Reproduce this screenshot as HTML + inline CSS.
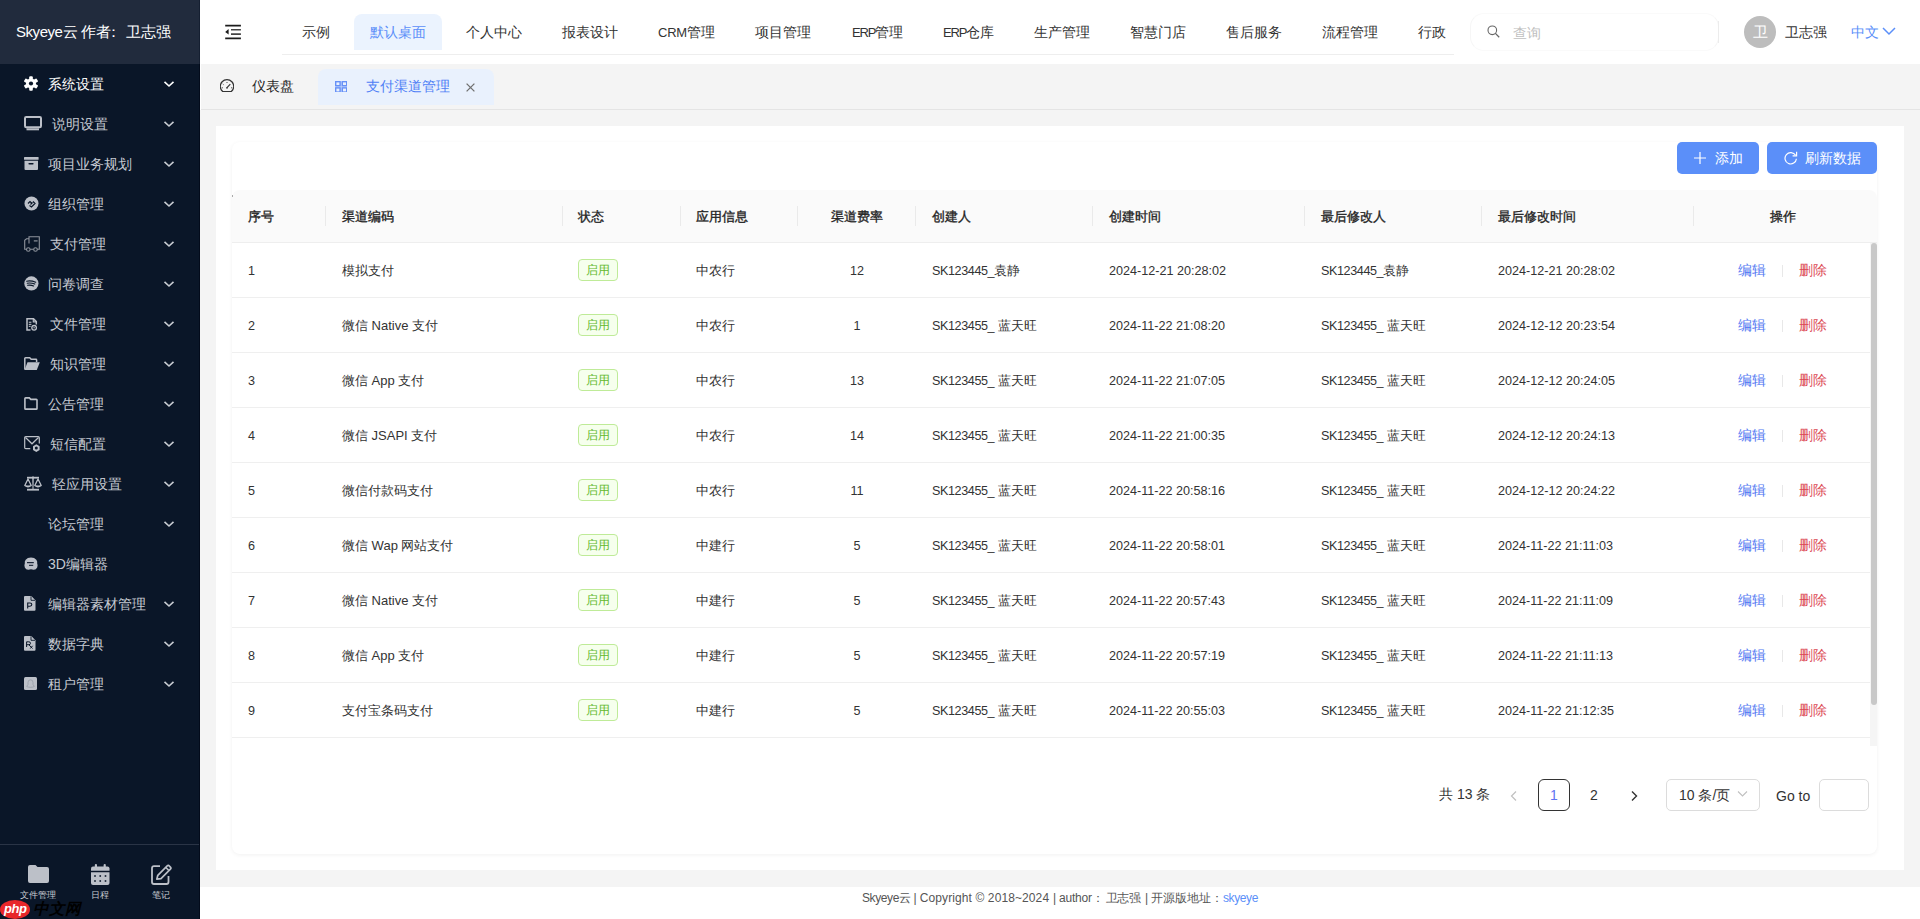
<!DOCTYPE html><html><head><meta charset="utf-8"><style>
*{margin:0;padding:0;box-sizing:border-box;}
html,body{width:1920px;height:919px;overflow:hidden;background:#fff;font-family:"Liberation Sans",sans-serif;color:#333;}
.ab{position:absolute;white-space:nowrap;}
#side{position:absolute;left:0;top:0;width:200px;height:919px;background:#0a1628;}
#logo{position:absolute;left:0;top:0;width:200px;height:64px;background:#212b3d;}
.mt{position:absolute;font-size:14px;line-height:16px;color:#c6cad2;white-space:nowrap;}
.ch{position:absolute;left:163px;width:12px;height:8px;}
#hdr{position:absolute;left:200px;top:0;width:1720px;height:64px;background:#fff;}
.nv{position:absolute;top:24px;font-size:14px;line-height:16px;color:#333;white-space:nowrap;}
#tabs{position:absolute;left:201px;top:64px;width:1719px;height:46px;background:#f4f4f4;border-bottom:1px solid #e4e4e4;}
#main{position:absolute;left:200px;top:110px;width:1720px;height:777px;background:#f4f4f4;}
#card{position:absolute;left:216px;top:126px;width:1688px;height:744px;background:#fff;}
#panel{position:absolute;left:232px;top:142px;width:1645px;height:712px;background:#fff;border-radius:8px;box-shadow:0 1px 4px rgba(0,0,0,0.06);}
#foot{position:absolute;left:200px;top:887px;width:1720px;height:32px;background:#fff;}
.th{position:absolute;top:209px;font-size:13px;line-height:16px;font-weight:normal;-webkit-text-stroke:0.35px #262626;color:#222;white-space:nowrap;}
.sep{position:absolute;top:206px;width:1px;height:20px;background:#eaeaea;}
.td{position:absolute;font-size:13px;line-height:16px;color:#333;white-space:nowrap;}
.num{font-size:12.6px;}
.tag{position:absolute;left:578px;width:40px;height:22px;border:1px solid #bfeb98;background:#f6ffed;border-radius:4px;color:#62b92c;font-size:12px;line-height:20px;text-align:center;}
.rl{position:absolute;left:232px;width:1638px;height:1px;background:#efefef;}
.ed{position:absolute;left:1738px;font-size:14px;line-height:16px;color:#5479f2;}
.dl{position:absolute;left:1799px;font-size:14px;line-height:16px;color:#dc4a55;}
.dv{position:absolute;left:1782px;width:1px;height:12px;background:#e8e8e8;}
</style></head><body>
<div id="side"><div id="logo"></div>
<div class="ab" style="left:16px;top:22px;font-size:15px;line-height:20px;color:#fff;"><span style="letter-spacing:-0.45px">Skyeye</span>云</div>
<div class="ab" style="left:81px;top:22px;font-size:15px;line-height:20px;color:#fff;">作者</div>
<div class="ab" style="left:106px;top:22px;font-size:15px;line-height:20px;color:#fff;">：</div>
<div class="ab" style="left:125.5px;top:22px;font-size:15px;line-height:20px;color:#fff;">卫志强</div>
<div class="mt" style="left:48px;top:76px;color:#ffffff">系统设置</div>
<svg class="ch" style="top:79.5px" viewBox="0 0 12 8"><path d="M1.5 1.8 L6 6 L10.5 1.8" fill="none" stroke="#ffffff" stroke-width="1.6"/></svg>
<div class="mt" style="left:52px;top:116px;color:#c6cad2">说明设置</div>
<svg class="ch" style="top:119.5px" viewBox="0 0 12 8"><path d="M1.5 1.8 L6 6 L10.5 1.8" fill="none" stroke="#c8ccd2" stroke-width="1.6"/></svg>
<div class="mt" style="left:48px;top:156px;color:#c6cad2">项目业务规划</div>
<svg class="ch" style="top:159.5px" viewBox="0 0 12 8"><path d="M1.5 1.8 L6 6 L10.5 1.8" fill="none" stroke="#c8ccd2" stroke-width="1.6"/></svg>
<div class="mt" style="left:48px;top:196px;color:#c6cad2">组织管理</div>
<svg class="ch" style="top:199.5px" viewBox="0 0 12 8"><path d="M1.5 1.8 L6 6 L10.5 1.8" fill="none" stroke="#c8ccd2" stroke-width="1.6"/></svg>
<div class="mt" style="left:50px;top:236px;color:#c6cad2">支付管理</div>
<svg class="ch" style="top:239.5px" viewBox="0 0 12 8"><path d="M1.5 1.8 L6 6 L10.5 1.8" fill="none" stroke="#c8ccd2" stroke-width="1.6"/></svg>
<div class="mt" style="left:48px;top:276px;color:#c6cad2">问卷调查</div>
<svg class="ch" style="top:279.5px" viewBox="0 0 12 8"><path d="M1.5 1.8 L6 6 L10.5 1.8" fill="none" stroke="#c8ccd2" stroke-width="1.6"/></svg>
<div class="mt" style="left:50px;top:316px;color:#c6cad2">文件管理</div>
<svg class="ch" style="top:319.5px" viewBox="0 0 12 8"><path d="M1.5 1.8 L6 6 L10.5 1.8" fill="none" stroke="#c8ccd2" stroke-width="1.6"/></svg>
<div class="mt" style="left:50px;top:356px;color:#c6cad2">知识管理</div>
<svg class="ch" style="top:359.5px" viewBox="0 0 12 8"><path d="M1.5 1.8 L6 6 L10.5 1.8" fill="none" stroke="#c8ccd2" stroke-width="1.6"/></svg>
<div class="mt" style="left:48px;top:396px;color:#c6cad2">公告管理</div>
<svg class="ch" style="top:399.5px" viewBox="0 0 12 8"><path d="M1.5 1.8 L6 6 L10.5 1.8" fill="none" stroke="#c8ccd2" stroke-width="1.6"/></svg>
<div class="mt" style="left:50px;top:436px;color:#c6cad2">短信配置</div>
<svg class="ch" style="top:439.5px" viewBox="0 0 12 8"><path d="M1.5 1.8 L6 6 L10.5 1.8" fill="none" stroke="#c8ccd2" stroke-width="1.6"/></svg>
<div class="mt" style="left:52px;top:476px;color:#c6cad2">轻应用设置</div>
<svg class="ch" style="top:479.5px" viewBox="0 0 12 8"><path d="M1.5 1.8 L6 6 L10.5 1.8" fill="none" stroke="#c8ccd2" stroke-width="1.6"/></svg>
<div class="mt" style="left:48px;top:516px;color:#c6cad2">论坛管理</div>
<svg class="ch" style="top:519.5px" viewBox="0 0 12 8"><path d="M1.5 1.8 L6 6 L10.5 1.8" fill="none" stroke="#c8ccd2" stroke-width="1.6"/></svg>
<div class="mt" style="left:48px;top:556px;color:#c6cad2">3D编辑器</div>
<div class="mt" style="left:48px;top:596px;color:#c6cad2">编辑器素材管理</div>
<svg class="ch" style="top:599.5px" viewBox="0 0 12 8"><path d="M1.5 1.8 L6 6 L10.5 1.8" fill="none" stroke="#c8ccd2" stroke-width="1.6"/></svg>
<div class="mt" style="left:48px;top:636px;color:#c6cad2">数据字典</div>
<svg class="ch" style="top:639.5px" viewBox="0 0 12 8"><path d="M1.5 1.8 L6 6 L10.5 1.8" fill="none" stroke="#c8ccd2" stroke-width="1.6"/></svg>
<div class="mt" style="left:48px;top:676px;color:#c6cad2">租户管理</div>
<svg class="ch" style="top:679.5px" viewBox="0 0 12 8"><path d="M1.5 1.8 L6 6 L10.5 1.8" fill="none" stroke="#c8ccd2" stroke-width="1.6"/></svg>
<svg class="ab" style="left:24px;top:76px;" width="14" height="15" viewBox="0 0 14 15"><rect x="5.2" y="0.2" width="3.6" height="3.6" rx="1" fill="#fff" transform="rotate(0 7 7.5)"/><rect x="5.2" y="0.2" width="3.6" height="3.6" rx="1" fill="#fff" transform="rotate(60 7 7.5)"/><rect x="5.2" y="0.2" width="3.6" height="3.6" rx="1" fill="#fff" transform="rotate(120 7 7.5)"/><rect x="5.2" y="0.2" width="3.6" height="3.6" rx="1" fill="#fff" transform="rotate(180 7 7.5)"/><rect x="5.2" y="0.2" width="3.6" height="3.6" rx="1" fill="#fff" transform="rotate(240 7 7.5)"/><rect x="5.2" y="0.2" width="3.6" height="3.6" rx="1" fill="#fff" transform="rotate(300 7 7.5)"/><circle cx="7" cy="7.5" r="5" fill="#fff"/><circle cx="7" cy="7.5" r="2.1" fill="#0a1628"/></svg>
<svg class="ab" style="left:24px;top:116px;" width="18" height="15" viewBox="0 0 18 15"><rect x="1" y="1" width="16" height="10.2" rx="1.2" fill="none" stroke="#bcc0c8" stroke-width="2"/><rect x="2.5" y="12.3" width="12.5" height="2" fill="#bcc0c8"/></svg>
<svg class="ab" style="left:24px;top:157px;" width="15" height="13" viewBox="0 0 15 13"><rect x="0" y="0" width="14.6" height="2.8" rx="0.6" fill="#bcc0c8"/><path d="M0.5 3.8 H14 V12 Q14 13 13 13 H1.5 Q0.5 13 0.5 12 Z" fill="#bcc0c8"/><rect x="4.4" y="6" width="5.2" height="1.4" rx="0.7" fill="#0a1628"/></svg>
<svg class="ab" style="left:23.5px;top:196.2px;" width="15" height="15" viewBox="0 0 15 15"><circle cx="7.5" cy="7.5" r="7" fill="#bcc0c8"/><path d="M4 7.5 L6 5.5 L7.5 7 M5.5 9.5 L7.5 11 L11 7.5 L9 5.5 M6.5 8.5 L8.5 6.5" fill="none" stroke="#0a1628" stroke-width="1.2"/></svg>
<svg class="ab" style="left:24px;top:236px;" width="16" height="16" viewBox="0 0 16 16"><path d="M5 7.5 V0.7 H15.3 V13.3 H13.3 M9.5 13.3 H6.2 M2.3 13.3 H0.7 V4.3 L2.5 2.8 H4.8" fill="none" stroke="#8e939c" stroke-width="1.1"/><circle cx="4.3" cy="13.5" r="1.8" fill="none" stroke="#8e939c" stroke-width="1.1"/><circle cx="11.5" cy="13.5" r="1.8" fill="none" stroke="#8e939c" stroke-width="1.1"/><rect x="9.8" y="4.3" width="3.8" height="1.2" fill="#8e939c"/></svg>
<svg class="ab" style="left:23.5px;top:276.3px;" width="15" height="15" viewBox="0 0 15 15"><circle cx="7.4" cy="7.4" r="7.1" fill="#bcc0c8"/><path d="M2.6 5.2 Q7 4.3 11.7 6.2 M3.2 7.2 Q7 6.5 10.8 8.1 M3.6 9.3 Q6.8 8.7 9.6 10" fill="none" stroke="#0a1628" stroke-width="1.1" stroke-linecap="round"/></svg>
<svg class="ab" style="left:26px;top:317.5px;" width="12" height="13" viewBox="0 0 12 13"><path d="M4.5 12 H1 V0.8 H7.5 L10.3 3.6 V6.5" fill="none" stroke="#bcc0c8" stroke-width="1.5"/><path d="M7.3 0.8 V3.8 H10.3" fill="none" stroke="#bcc0c8" stroke-width="1.2"/><rect x="2.8" y="3.7" width="2.6" height="1.1" fill="#bcc0c8"/><rect x="2.8" y="5.8" width="2.6" height="1.1" fill="#bcc0c8"/><rect x="2.8" y="7.8" width="1.8" height="1.1" fill="#bcc0c8"/><circle cx="8.1" cy="9.8" r="2.3" fill="none" stroke="#bcc0c8" stroke-width="1.3"/><circle cx="8.1" cy="9.8" r="0.7" fill="#bcc0c8"/></svg>
<svg class="ab" style="left:24px;top:357px;" width="16" height="13" viewBox="0 0 16 13"><path d="M0.8 12.5 V1.5 Q0.8 0.8 1.5 0.8 H5.7 L7.2 2.3 H12 Q12.6 2.3 12.6 3 V5" fill="none" stroke="#bcc0c8" stroke-width="1.5"/><path d="M0.5 13 L3.5 5.3 H15.8 L12.8 13 Z" fill="#bcc0c8"/></svg>
<svg class="ab" style="left:24px;top:397px;" width="14" height="13" viewBox="0 0 14 13"><path d="M0.9 1.6 Q0.9 0.9 1.6 0.9 H5.3 L6.8 2.4 H12.3 Q13 2.4 13 3.1 V11.4 Q13 12.1 12.3 12.1 H1.6 Q0.9 12.1 0.9 11.4 Z" fill="none" stroke="#bcc0c8" stroke-width="1.6"/></svg>
<svg class="ab" style="left:24px;top:435.5px;" width="17" height="17" viewBox="0 0 17 17"><path d="M6.3 12.7 H1.8 Q0.7 12.7 0.7 11.6 V1.8 Q0.7 0.7 1.8 0.7 H14.2 Q15.3 0.7 15.3 1.8 V7.5" fill="none" stroke="#bcc0c8" stroke-width="1.2"/><path d="M1.5 1.5 L8 7.8 L14.5 1.5" fill="none" stroke="#bcc0c8" stroke-width="1.2"/><path d="M12.3 8.3 L15.6 10.2 V14 L12.3 15.9 L9 14 V10.2 Z" fill="#bcc0c8"/><circle cx="12.3" cy="12.1" r="1.5" fill="#0a1628"/></svg>
<svg class="ab" style="left:24px;top:476px;" width="18" height="15" viewBox="0 0 18 15"><rect x="3" y="0.8" width="12" height="1.8" fill="#bcc0c8"/><path d="M8.2 0.5 H9.8 L9.5 13 H8.5 Z" fill="#bcc0c8"/><rect x="3" y="12.8" width="12" height="1.8" fill="#bcc0c8"/><path d="M4 3 L0.8 9.5 Q4 12 7.2 9.5 Z M14 3 L10.8 9.5 Q14 12 17.2 9.5 Z" fill="none" stroke="#bcc0c8" stroke-width="1.3" stroke-linejoin="round"/><path d="M1.4 9.5 H6.6 Q4 11.3 1.4 9.5 Z M11.4 9.5 H16.6 Q14 11.3 11.4 9.5 Z" fill="#bcc0c8"/></svg>
<svg class="ab" style="left:24px;top:557px;" width="14" height="13.5" viewBox="0 0 14 13.5"><path d="M7 0.6 Q10.5 0.6 12.3 2.8 Q13.6 4.5 13.2 6.5 Q14 8 13.2 10.5 Q12 13 9.5 12.8 L7 12.2 L4.5 12.8 Q2 13 0.8 10.5 Q0 8 0.8 6.5 Q0.4 4.5 1.7 2.8 Q3.5 0.6 7 0.6 Z" fill="#bcc0c8"/><rect x="3" y="5.1" width="6.8" height="1.1" fill="#0a1628"/><rect x="5" y="7.8" width="4.2" height="1" fill="#0a1628"/></svg>
<svg class="ab" style="left:24px;top:596px;" width="12" height="15" viewBox="0 0 12 15"><path d="M0 1 Q0 0 1 0 H7.3 L11.5 4.2 V13.8 Q11.5 14.8 10.5 14.8 H1 Q0 14.8 0 13.8 Z" fill="#bcc0c8"/><path d="M7 0.3 V4.3 H11.2" fill="none" stroke="#0a1628" stroke-width="0.9"/><path d="M3.7 12.5 V7 H6 Q7.8 7 7.8 8.6 Q7.8 10.2 6 10.2 H3.7" fill="none" stroke="#0a1628" stroke-width="1.1"/></svg>
<svg class="ab" style="left:24px;top:636px;" width="12" height="15" viewBox="0 0 12 15"><path d="M0 1 Q0 0 1 0 H7.3 L11.5 4.2 V13.8 Q11.5 14.8 10.5 14.8 H1 Q0 14.8 0 13.8 Z" fill="#bcc0c8"/><path d="M7 0.3 V4.3 H11.2" fill="none" stroke="#0a1628" stroke-width="0.9"/><path d="M2.6 11 V5.8 H4.8 Q6.5 5.8 6.5 7.3 Q6.5 8.7 4.8 8.7 H2.6 M4.8 8.7 L8.5 12.5 M8.6 9.8 L6.3 12.5" fill="none" stroke="#0a1628" stroke-width="1"/></svg>
<svg class="ab" style="left:24px;top:677px;" width="13" height="13" viewBox="0 0 13 13"><rect x="0" y="0" width="13" height="13" rx="1.5" fill="#bcc0c8"/><path d="M6.5 2.8 Q9 2.8 9 5.5 V7.5 L10.3 9.5 Q9 10.3 6.5 10.3 Q4 10.3 2.7 9.5 L4 7.5 V5.5 Q4 2.8 6.5 2.8 Z" fill="none" stroke="#9aa0aa" stroke-width="0.9"/></svg>
<div class="ab" style="left:0;top:844px;width:200px;height:1px;background:#2a3446"></div>
<svg class="ab" style="left:28.3px;top:865.2px;" width="21" height="18" viewBox="0 0 21 18"><path d="M0 2 Q0 0 2 0 H7.5 L9.5 2 H19 Q21 2 21 4 V16 Q21 18 19 18 H2 Q0 18 0 16 Z" fill="#bcc0c8"/></svg>
<svg class="ab" style="left:90.7px;top:864px;" width="19" height="21" viewBox="0 0 19 21"><rect x="3.8" y="0" width="2.2" height="4" rx="1" fill="#bcc0c8"/><rect x="12.6" y="0" width="2.2" height="4" rx="1" fill="#bcc0c8"/><path d="M0 4.5 Q0 2.6 2 2.6 H16.5 Q18.5 2.6 18.5 4.5 V6.8 H0 Z" fill="#bcc0c8"/><path d="M0 8.2 H18.5 V19 Q18.5 21 16.5 21 H2 Q0 21 0 19 Z" fill="#bcc0c8"/><rect x="3.20" y="11.20" width="1.6" height="1.6" fill="#0a1628"/><rect x="3.20" y="16.20" width="1.6" height="1.6" fill="#0a1628"/><rect x="8.45" y="11.20" width="1.6" height="1.6" fill="#0a1628"/><rect x="8.45" y="16.20" width="1.6" height="1.6" fill="#0a1628"/><rect x="13.70" y="11.20" width="1.6" height="1.6" fill="#0a1628"/><rect x="13.70" y="16.20" width="1.6" height="1.6" fill="#0a1628"/></svg>
<svg class="ab" style="left:151px;top:864.3px;" width="21" height="21" viewBox="0 0 21 21"><path d="M9 2.2 H3 Q1 2.2 1 4.2 V18 Q1 20 3 20 H15.5 Q17.5 20 17.5 18 V12" fill="none" stroke="#bcc0c8" stroke-width="1.8"/><path d="M5.8 15.2 L6.8 11.3 L16.2 1.9 Q17.2 0.9 18.4 2.1 L19.4 3.1 Q20.4 4.2 19.4 5.2 L10 14.6 Z" fill="none" stroke="#bcc0c8" stroke-width="1.7" stroke-linejoin="round"/><path d="M14.8 3.4 L17.9 6.5" stroke="#bcc0c8" stroke-width="1.5"/></svg>
<div class="ab" style="left:20px;top:890px;font-size:9.3px;line-height:11px;color:#c8ccd2;">文件管理</div>
<div class="ab" style="left:91px;top:890px;font-size:9.3px;line-height:11px;color:#c8ccd2;">日程</div>
<div class="ab" style="left:152px;top:890px;font-size:9.3px;line-height:11px;color:#c8ccd2;">笔记</div>
<div class="ab" style="left:199px;top:0;width:1px;height:64px;background:#151f31"></div>
<div class="ab" style="left:199px;top:64px;width:1px;height:855px;background:#030b1b"></div>
</div>
<div id="hdr"></div>
<svg class="ab" style="left:220px;top:20px;" width="26" height="24" viewBox="0 0 26 24"><path d="M5.2 5.6 H20.9 M5.2 18.4 H20.9" stroke="#1c1c1c" stroke-width="1.6"/><path d="M11 9.8 H20.9 M11 14.1 H20.9" stroke="#444" stroke-width="1.6"/><path d="M8.6 9.1 V14.6 L5.2 11.9 Z" fill="#1c1c1c"/></svg>
<div class="ab" style="left:282px;top:54px;width:1172px;height:1px;background:#eeeeee"></div>
<div class="ab" style="left:354px;top:14px;width:88px;height:36px;background:#ebf3fe;border-radius:8px 8px 0 0"></div>
<div class="nv" style="left:302px;color:#333">示例</div>
<div class="nv" style="left:370px;color:#5b8ff9">默认桌面</div>
<div class="nv" style="left:466px;color:#333">个人中心</div>
<div class="nv" style="left:562px;color:#333">报表设计</div>
<div class="nv" style="left:658px;color:#333"><span style="font-size:13px;letter-spacing:-0.25px">CRM</span>管理</div>
<div class="nv" style="left:755px;color:#333">项目管理</div>
<div class="nv" style="left:852px;color:#333"><span style="font-size:13px;letter-spacing:-1.2px">ERP</span>管理</div>
<div class="nv" style="left:943px;color:#333"><span style="font-size:13px;letter-spacing:-1.2px">ERP</span>仓库</div>
<div class="nv" style="left:1034px;color:#333">生产管理</div>
<div class="nv" style="left:1130px;color:#333">智慧门店</div>
<div class="nv" style="left:1226px;color:#333">售后服务</div>
<div class="nv" style="left:1322px;color:#333">流程管理</div>
<div class="nv" style="left:1418px;color:#333">行政</div>
<div class="ab" style="left:1470px;top:13px;width:249px;height:38px;border:1px solid #fafafa;border-left-color:#f6f6f6;border-right-color:#f6f6f6;border-radius:14px"></div>
<div class="ab" style="left:1718px;top:21px;width:1px;height:22px;background:#ececec"></div>
<svg class="ab" style="left:1486.5px;top:25.3px;" width="13" height="13" viewBox="0 0 13 13"><circle cx="5.3" cy="5.3" r="4.3" fill="none" stroke="#666" stroke-width="1.1"/><path d="M8.4 8.4 L12.2 12.2" stroke="#666" stroke-width="1.3"/></svg>
<div class="ab" style="left:1512.5px;top:25px;font-size:14px;line-height:16px;color:#c0c0c0;">查询</div>
<div class="ab" style="left:1744px;top:16px;width:32px;height:32px;border-radius:50%;background:#bdbdbd;color:#fff;font-size:15px;line-height:32px;text-align:center">卫</div>
<div class="nv" style="left:1785px;">卫志强</div>
<div class="nv" style="left:1851px;color:#5b8ff9">中文</div>
<svg class="ab" style="left:1882px;top:26px" width="14" height="10" viewBox="0 0 14 10"><path d="M1 2 L7 8 L13 2" fill="none" stroke="#5b8ff9" stroke-width="1.5"/></svg>
<div id="tabs"></div>
<div class="ab" style="left:318px;top:69px;width:176px;height:36px;background:#e9f1fd;border-radius:8px 8px 0 0"></div>
<div class="ab" style="left:252px;top:78px;font-size:14px;line-height:16px;color:#262626">仪表盘</div>
<div class="ab" style="left:366px;top:78px;font-size:14px;line-height:16px;color:#4f80f6">支付渠道管理</div>
<svg class="ab" style="left:220px;top:79px;" width="14" height="14" viewBox="0 0 14 14"><path d="M2.7 12.5 A6.7 6.7 0 1 1 11.3 12.5 Z" fill="none" stroke="#333" stroke-width="1.2" stroke-linejoin="round"/><path d="M7 8.7 L10.3 5.2" stroke="#333" stroke-width="1.2"/><circle cx="7" cy="8.8" r="0.9" fill="#333"/><path d="M7 3 V3.9 M2.8 5 L3.5 5.6 M1.8 8.8 H2.8 M11.2 8.8 H12.2" stroke="#333" stroke-width="1"/></svg>
<svg class="ab" style="left:335px;top:80.5px;" width="12.4" height="11.7" viewBox="0 0 12.4 11.7"><rect x="5" y="0.5" width="2.4" height="11" fill="#c3d5fb"/><rect x="0.5" y="4.5" width="11.4" height="2.4" fill="#c3d5fb"/><rect x="0.7" y="0.7" width="4.4" height="4" fill="none" stroke="#6791f7" stroke-width="1.4"/><rect x="7.3" y="0.7" width="4.4" height="4" fill="none" stroke="#6791f7" stroke-width="1.4"/><rect x="0.7" y="6.9" width="4.4" height="4.2" fill="none" stroke="#6791f7" stroke-width="1.4"/><rect x="7.3" y="6.9" width="4.4" height="4.2" fill="none" stroke="#6791f7" stroke-width="1.4"/></svg>
<svg class="ab" style="left:465.5px;top:82.6px;" width="9" height="9" viewBox="0 0 9 9"><path d="M0.6 0.6 L8.4 8.4 M8.4 0.6 L0.6 8.4" stroke="#707070" stroke-width="1.3"/></svg>
<div id="main"></div><div id="card"></div><div id="panel"></div>
<div class="ab" style="left:1677px;top:142px;width:82px;height:32px;background:#5b8ff9;border-radius:5px"></div>
<div class="ab" style="left:1767px;top:142px;width:110px;height:32px;background:#5b8ff9;border-radius:5px"></div>
<div class="ab" style="left:1715px;top:150px;font-size:14px;line-height:16px;color:#fff">添加</div>
<div class="ab" style="left:1805px;top:150px;font-size:14px;line-height:16px;color:#fff">刷新数据</div>
<svg class="ab" style="left:1694px;top:152px;" width="12" height="12" viewBox="0 0 12 12"><path d="M6 0 V12 M0 6 H12" stroke="#fff" stroke-width="1.2"/></svg>
<svg class="ab" style="left:1783.5px;top:151px;" width="14" height="14" viewBox="0 0 14 14"><path d="M11.6 4.3 A5.7 5.7 0 1 0 12.4 7.7" fill="none" stroke="#fff" stroke-width="1.2"/><path d="M12.6 0.8 V4.8 H8.6" fill="none" stroke="#fff" stroke-width="1.2"/></svg>
<div class="ab" style="left:232px;top:190px;width:1645px;height:53px;background:#fafafa;border-radius:8px 8px 0 0;border-bottom:1px solid #eeeeee"></div>
<div class="th" style="left:248px">序号</div>
<div class="th" style="left:342px">渠道编码</div>
<div class="th" style="left:578px">状态</div>
<div class="th" style="left:696px">应用信息</div>
<div class="th" style="left:831px">渠道费率</div>
<div class="th" style="left:932px">创建人</div>
<div class="th" style="left:1109px">创建时间</div>
<div class="th" style="left:1321px">最后修改人</div>
<div class="th" style="left:1498px">最后修改时间</div>
<div class="th" style="left:1770px">操作</div>
<div class="sep" style="left:325px"></div>
<div class="sep" style="left:562px"></div>
<div class="sep" style="left:680px"></div>
<div class="sep" style="left:797px"></div>
<div class="sep" style="left:915px"></div>
<div class="sep" style="left:1092px"></div>
<div class="sep" style="left:1304px"></div>
<div class="sep" style="left:1481px"></div>
<div class="sep" style="left:1693px"></div>
<div class="td num" style="left:248px;top:262.5px">1</div>
<div class="td" style="left:342px;top:262.5px">模拟支付</div>
<div class="tag" style="top:259px">启用</div>
<div class="td" style="left:696px;top:262.5px">中农行</div>
<div class="td num" style="left:807px;width:100px;text-align:center;top:262.5px">12</div>
<div class="td num" style="left:932px;top:262.5px"><span style="letter-spacing:-0.4px">SK123445_</span>袁静</div>
<div class="td num" style="left:1109px;top:262.5px">2024-12-21 20:28:02</div>
<div class="td num" style="left:1321px;top:262.5px"><span style="letter-spacing:-0.4px">SK123445_</span>袁静</div>
<div class="td num" style="left:1498px;top:262.5px">2024-12-21 20:28:02</div>
<div class="ed" style="top:261.5px">编辑</div>
<div class="dv" style="top:265px"></div>
<div class="dl" style="top:261.5px">删除</div>
<div class="rl" style="top:297px"></div>
<div class="td num" style="left:248px;top:317.5px">2</div>
<div class="td" style="left:342px;top:317.5px">微信 Native 支付</div>
<div class="tag" style="top:314px">启用</div>
<div class="td" style="left:696px;top:317.5px">中农行</div>
<div class="td num" style="left:807px;width:100px;text-align:center;top:317.5px">1</div>
<div class="td num" style="left:932px;top:317.5px"><span style="letter-spacing:-0.4px">SK123455_</span> 蓝天旺</div>
<div class="td num" style="left:1109px;top:317.5px">2024-11-22 21:08:20</div>
<div class="td num" style="left:1321px;top:317.5px"><span style="letter-spacing:-0.4px">SK123455_</span> 蓝天旺</div>
<div class="td num" style="left:1498px;top:317.5px">2024-12-12 20:23:54</div>
<div class="ed" style="top:316.5px">编辑</div>
<div class="dv" style="top:320px"></div>
<div class="dl" style="top:316.5px">删除</div>
<div class="rl" style="top:352px"></div>
<div class="td num" style="left:248px;top:372.5px">3</div>
<div class="td" style="left:342px;top:372.5px">微信 App 支付</div>
<div class="tag" style="top:369px">启用</div>
<div class="td" style="left:696px;top:372.5px">中农行</div>
<div class="td num" style="left:807px;width:100px;text-align:center;top:372.5px">13</div>
<div class="td num" style="left:932px;top:372.5px"><span style="letter-spacing:-0.4px">SK123455_</span> 蓝天旺</div>
<div class="td num" style="left:1109px;top:372.5px">2024-11-22 21:07:05</div>
<div class="td num" style="left:1321px;top:372.5px"><span style="letter-spacing:-0.4px">SK123455_</span> 蓝天旺</div>
<div class="td num" style="left:1498px;top:372.5px">2024-12-12 20:24:05</div>
<div class="ed" style="top:371.5px">编辑</div>
<div class="dv" style="top:375px"></div>
<div class="dl" style="top:371.5px">删除</div>
<div class="rl" style="top:407px"></div>
<div class="td num" style="left:248px;top:427.5px">4</div>
<div class="td" style="left:342px;top:427.5px">微信 JSAPI 支付</div>
<div class="tag" style="top:424px">启用</div>
<div class="td" style="left:696px;top:427.5px">中农行</div>
<div class="td num" style="left:807px;width:100px;text-align:center;top:427.5px">14</div>
<div class="td num" style="left:932px;top:427.5px"><span style="letter-spacing:-0.4px">SK123455_</span> 蓝天旺</div>
<div class="td num" style="left:1109px;top:427.5px">2024-11-22 21:00:35</div>
<div class="td num" style="left:1321px;top:427.5px"><span style="letter-spacing:-0.4px">SK123455_</span> 蓝天旺</div>
<div class="td num" style="left:1498px;top:427.5px">2024-12-12 20:24:13</div>
<div class="ed" style="top:426.5px">编辑</div>
<div class="dv" style="top:430px"></div>
<div class="dl" style="top:426.5px">删除</div>
<div class="rl" style="top:462px"></div>
<div class="td num" style="left:248px;top:482.5px">5</div>
<div class="td" style="left:342px;top:482.5px">微信付款码支付</div>
<div class="tag" style="top:479px">启用</div>
<div class="td" style="left:696px;top:482.5px">中农行</div>
<div class="td num" style="left:807px;width:100px;text-align:center;top:482.5px">11</div>
<div class="td num" style="left:932px;top:482.5px"><span style="letter-spacing:-0.4px">SK123455_</span> 蓝天旺</div>
<div class="td num" style="left:1109px;top:482.5px">2024-11-22 20:58:16</div>
<div class="td num" style="left:1321px;top:482.5px"><span style="letter-spacing:-0.4px">SK123455_</span> 蓝天旺</div>
<div class="td num" style="left:1498px;top:482.5px">2024-12-12 20:24:22</div>
<div class="ed" style="top:481.5px">编辑</div>
<div class="dv" style="top:485px"></div>
<div class="dl" style="top:481.5px">删除</div>
<div class="rl" style="top:517px"></div>
<div class="td num" style="left:248px;top:537.5px">6</div>
<div class="td" style="left:342px;top:537.5px">微信 Wap 网站支付</div>
<div class="tag" style="top:534px">启用</div>
<div class="td" style="left:696px;top:537.5px">中建行</div>
<div class="td num" style="left:807px;width:100px;text-align:center;top:537.5px">5</div>
<div class="td num" style="left:932px;top:537.5px"><span style="letter-spacing:-0.4px">SK123455_</span> 蓝天旺</div>
<div class="td num" style="left:1109px;top:537.5px">2024-11-22 20:58:01</div>
<div class="td num" style="left:1321px;top:537.5px"><span style="letter-spacing:-0.4px">SK123455_</span> 蓝天旺</div>
<div class="td num" style="left:1498px;top:537.5px">2024-11-22 21:11:03</div>
<div class="ed" style="top:536.5px">编辑</div>
<div class="dv" style="top:540px"></div>
<div class="dl" style="top:536.5px">删除</div>
<div class="rl" style="top:572px"></div>
<div class="td num" style="left:248px;top:592.5px">7</div>
<div class="td" style="left:342px;top:592.5px">微信 Native 支付</div>
<div class="tag" style="top:589px">启用</div>
<div class="td" style="left:696px;top:592.5px">中建行</div>
<div class="td num" style="left:807px;width:100px;text-align:center;top:592.5px">5</div>
<div class="td num" style="left:932px;top:592.5px"><span style="letter-spacing:-0.4px">SK123455_</span> 蓝天旺</div>
<div class="td num" style="left:1109px;top:592.5px">2024-11-22 20:57:43</div>
<div class="td num" style="left:1321px;top:592.5px"><span style="letter-spacing:-0.4px">SK123455_</span> 蓝天旺</div>
<div class="td num" style="left:1498px;top:592.5px">2024-11-22 21:11:09</div>
<div class="ed" style="top:591.5px">编辑</div>
<div class="dv" style="top:595px"></div>
<div class="dl" style="top:591.5px">删除</div>
<div class="rl" style="top:627px"></div>
<div class="td num" style="left:248px;top:647.5px">8</div>
<div class="td" style="left:342px;top:647.5px">微信 App 支付</div>
<div class="tag" style="top:644px">启用</div>
<div class="td" style="left:696px;top:647.5px">中建行</div>
<div class="td num" style="left:807px;width:100px;text-align:center;top:647.5px">5</div>
<div class="td num" style="left:932px;top:647.5px"><span style="letter-spacing:-0.4px">SK123455_</span> 蓝天旺</div>
<div class="td num" style="left:1109px;top:647.5px">2024-11-22 20:57:19</div>
<div class="td num" style="left:1321px;top:647.5px"><span style="letter-spacing:-0.4px">SK123455_</span> 蓝天旺</div>
<div class="td num" style="left:1498px;top:647.5px">2024-11-22 21:11:13</div>
<div class="ed" style="top:646.5px">编辑</div>
<div class="dv" style="top:650px"></div>
<div class="dl" style="top:646.5px">删除</div>
<div class="rl" style="top:682px"></div>
<div class="td num" style="left:248px;top:702.5px">9</div>
<div class="td" style="left:342px;top:702.5px">支付宝条码支付</div>
<div class="tag" style="top:699px">启用</div>
<div class="td" style="left:696px;top:702.5px">中建行</div>
<div class="td num" style="left:807px;width:100px;text-align:center;top:702.5px">5</div>
<div class="td num" style="left:932px;top:702.5px"><span style="letter-spacing:-0.4px">SK123455_</span> 蓝天旺</div>
<div class="td num" style="left:1109px;top:702.5px">2024-11-22 20:55:03</div>
<div class="td num" style="left:1321px;top:702.5px"><span style="letter-spacing:-0.4px">SK123455_</span> 蓝天旺</div>
<div class="td num" style="left:1498px;top:702.5px">2024-11-22 21:12:35</div>
<div class="ed" style="top:701.5px">编辑</div>
<div class="dv" style="top:705px"></div>
<div class="dl" style="top:701.5px">删除</div>
<div class="rl" style="top:737px"></div>
<div class="ab" style="left:232px;top:194.5px;width:1px;height:2.5px;background:#aaa"></div>
<div class="ab" style="left:1870px;top:243px;width:7px;height:503px;background:#f5f5f5"></div>
<div class="ab" style="left:1871px;top:243px;width:6px;height:462px;background:#c8c8c8;border-radius:3px"></div>
<div class="ab" style="left:1439px;top:786px;font-size:14px;line-height:16px;color:#333">共 13 条</div>
<svg class="ab" style="left:1509px;top:790px" width="10" height="12" viewBox="0 0 10 12"><path d="M7 1.5 L2.5 6 L7 10.5" fill="none" stroke="#c0c0c0" stroke-width="1.2"/></svg>
<div class="ab" style="left:1538px;top:779px;width:32px;height:32px;border:1px solid #333;border-radius:6px;color:#5f74f3;font-size:14px;line-height:30px;text-align:center">1</div>
<div class="ab" style="left:1578px;top:779px;width:32px;height:32px;color:#333;font-size:14px;line-height:32px;text-align:center">2</div>
<svg class="ab" style="left:1629px;top:790px" width="10" height="12" viewBox="0 0 10 12"><path d="M3 1.5 L7.5 6 L3 10.5" fill="none" stroke="#333" stroke-width="1.4"/></svg>
<div class="ab" style="left:1666px;top:779px;width:94px;height:32px;border:1px solid #dcdcdc;border-radius:5px"></div>
<div class="ab" style="left:1679px;top:787px;font-size:14px;line-height:16px;color:#333">10 条/页</div>
<svg class="ab" style="left:1737px;top:790px" width="11" height="8" viewBox="0 0 11 8"><path d="M1 1.5 L5.5 6 L10 1.5" fill="none" stroke="#c0c0c0" stroke-width="1.1"/></svg>
<div class="ab" style="left:1776px;top:788px;font-size:14px;line-height:16px;color:#333">Go to</div>
<div class="ab" style="left:1819px;top:779px;width:50px;height:32px;border:1px solid #dcdcdc;border-radius:5px"></div>
<div id="foot"></div>
<div class="ab" style="left:862px;top:890px;font-size:12px;line-height:16px;letter-spacing:-0.4px;color:#555">Skyeye云</div>
<div class="ab" style="left:913.5px;top:890px;font-size:12px;line-height:16px;letter-spacing:0px;color:#555">|</div>
<div class="ab" style="left:919.8px;top:890px;font-size:12px;line-height:16px;letter-spacing:0.1px;color:#555">Copyright © 2018~2024</div>
<div class="ab" style="left:1053px;top:890px;font-size:12px;line-height:16px;letter-spacing:0px;color:#555">|</div>
<div class="ab" style="left:1059px;top:890px;font-size:12px;line-height:16px;letter-spacing:-0.2px;color:#555">author：</div>
<div class="ab" style="left:1105.8px;top:890px;font-size:12px;line-height:16px;letter-spacing:-0.3px;color:#555">卫志强</div>
<div class="ab" style="left:1145px;top:890px;font-size:12px;line-height:16px;letter-spacing:0px;color:#555">|</div>
<div class="ab" style="left:1151px;top:890px;font-size:12px;line-height:16px;letter-spacing:0px;color:#555">开源版地址：</div>
<div class="ab" style="left:1223px;top:890px;font-size:12px;line-height:16px;letter-spacing:-0.4px;color:#5b8ff9">skyeye</div>
<svg class="ab" style="left:0;top:899px" width="90" height="20" viewBox="0 0 90 20"><ellipse cx="15" cy="10.5" rx="15" ry="9.5" fill="#e8272a"/></svg>
<div class="ab" style="left:4px;top:901px;font-size:13px;line-height:16px;color:#fff;font-style:italic;font-weight:bold;letter-spacing:-0.5px">php</div>
<div class="ab" style="left:33px;top:901px;font-size:15.5px;line-height:16px;color:#000;font-style:italic;font-weight:bold">中文网</div>
</body></html>
